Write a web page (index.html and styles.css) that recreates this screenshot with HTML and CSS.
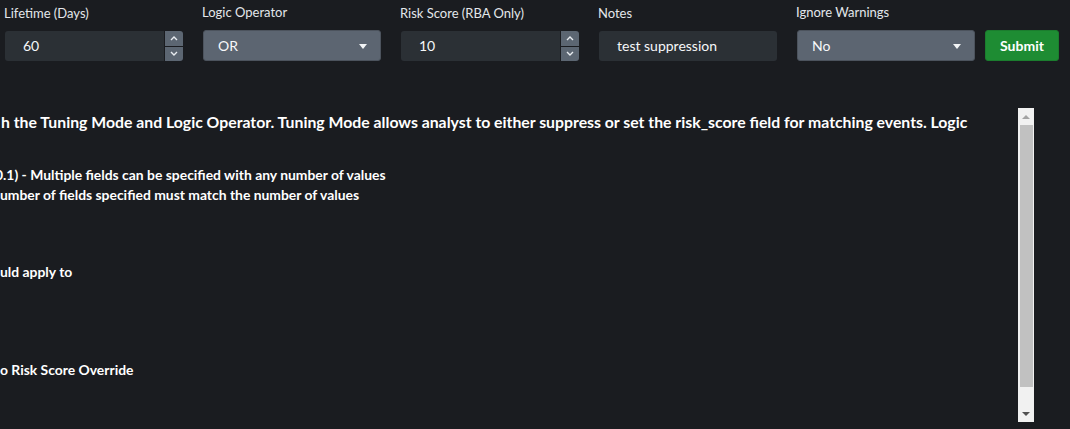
FILE: index.html
```html
<!DOCTYPE html>
<html>
<head>
<meta charset="utf-8">
<link rel="stylesheet" href="styles.css">
</head>
<body>
<div class="form">
  <div class="field">
    <div class="label">Lifetime (Days)</div>
    <div class="numbox">
      <div class="numinput">60</div>
      <div class="spinner">
        <div class="spin"><svg width="8" height="5" viewBox="0 0 8 5"><polyline points="1,4 4,1 7,4" fill="none" stroke="#e8ecf0" stroke-width="1.4"/></svg></div>
        <div class="spin"><svg width="8" height="5" viewBox="0 0 8 5"><polyline points="1,1 4,4 7,1" fill="none" stroke="#e8ecf0" stroke-width="1.4"/></svg></div>
      </div>
    </div>
  </div>
  <div class="field">
    <div class="label">Logic Operator</div>
    <div class="select"><span>OR</span><span class="caret"></span></div>
  </div>
  <div class="field">
    <div class="label">Risk Score (RBA Only)</div>
    <div class="numbox">
      <div class="numinput">10</div>
      <div class="spinner">
        <div class="spin"><svg width="8" height="5" viewBox="0 0 8 5"><polyline points="1,4 4,1 7,4" fill="none" stroke="#e8ecf0" stroke-width="1.4"/></svg></div>
        <div class="spin"><svg width="8" height="5" viewBox="0 0 8 5"><polyline points="1,1 4,4 7,1" fill="none" stroke="#e8ecf0" stroke-width="1.4"/></svg></div>
      </div>
    </div>
  </div>
  <div class="field">
    <div class="label">Notes</div>
    <div class="textinput">test suppression</div>
  </div>
  <div class="field last">
    <div class="label">Ignore Warnings</div>
    <div class="select"><span>No</span><span class="caret"></span></div>
  </div>
  <button class="submit">Submit</button>
</div>

<div class="panel">
  <div class="content">
    <p class="intro">h the Tuning Mode and Logic Operator. Tuning Mode allows analyst to either suppress or set the risk_score field for matching events. Logic</p>
    <p class="item clipped">0.1) - Multiple fields can be specified with any number of values</p>
    <p class="item">umber of fields specified must match the number of values</p>
    <p class="item sec1">uld apply to</p>
    <p class="item sec2">o Risk Score Override</p>
  </div>
  <div class="scrollbar">
    <div class="sb-btn"><span class="tri-up"></span></div>
    <div class="sb-track"><div class="sb-thumb"></div></div>
    <div class="sb-btn"><span class="tri-down"></span></div>
  </div>
</div>
</body>
</html>
```

FILE: styles.css
```css
html, body {
  margin: 0;
  padding: 0;
  background: #1a1c20;
  color: #e9ecef;
  font-family: "Lato", "Liberation Sans", sans-serif;
  height: 429px;
  overflow: hidden;
}

.form {
  display: flex;
  align-items: flex-end;
  padding: 4px 0 0 5px;
}

.field {
  width: 178px;
  margin-right: 20px;
  display: flex;
  flex-direction: column;
}
.field.last { margin-right: 10px; }

.label {
  font-size: 13px;
  line-height: 16px;
  height: 16px;
  margin: 0 0 10px -1px;
  color: #e3e7eb;
  white-space: nowrap;
}

.numbox {
  display: flex;
  height: 30px;
  gap: 1px;
}
.numinput {
  flex: 1;
  background: #2b3035;
  border-radius: 3px 0 0 3px;
  font-size: 14px;
  line-height: 30px;
  padding-left: 18px;
  color: #f5f7f9;
}
.spinner {
  width: 18px;
  display: flex;
  flex-direction: column;
  gap: 1px;
}
.spin {
  flex: 1;
  background: #5c6672;
  display: flex;
  align-items: center;
  justify-content: center;
}
.spin:first-child { border-radius: 0 3px 0 0; }
.spin:last-child { border-radius: 0 0 3px 0; }

.select {
  height: 29px;
  background: #5c6571;
  border: 1px solid #4c535d;
  border-radius: 3px;
  display: flex;
  align-items: center;
  justify-content: space-between;
  padding: 0 13px 0 14px;
  font-size: 14px;
  color: #f7f8fa;
}
.caret {
  width: 0;
  height: 0;
  border-left: 4px solid transparent;
  border-right: 4px solid transparent;
  border-top: 5px solid #f2f4f6;
  margin-top: 1px;
}

.textinput {
  height: 30px;
  background: #2b3035;
  border-radius: 3px;
  font-size: 14px;
  line-height: 30px;
  padding-left: 18px;
  color: #f5f7f9;
}

.submit {
  width: 74px;
  height: 31px;
  background: #1e8c33;
  border: 1px solid #1b7d2e;
  border-radius: 3px;
  color: #fff;
  font-family: inherit;
  font-size: 14px;
  font-weight: 700;
  padding: 0;
  cursor: pointer;
}

.panel {
  display: flex;
  margin-top: 47px;
  height: 314px;
}
.content {
  width: 1018px;
  overflow: hidden;
  white-space: nowrap;
  color: #ffffff;
}
.content p { margin: 0; }
.intro {
  font-size: 15.8px;
  font-weight: 700;
  line-height: 20px;
  margin-top: 4px !important;
  padding-left: 1px;
}
.item {
  font-size: 13.9px;
  font-weight: 700;
  line-height: 20px;
}
.clipped { margin-left: -5px !important; margin-top: 33px !important; }
.sec1 { margin-top: 57px !important; }
.sec2 { margin-top: 78px !important; }

.scrollbar {
  width: 16px;
  background: #f1f1f1;
  display: flex;
  flex-direction: column;
  align-items: center;
}
.sb-btn {
  height: 17px;
  width: 16px;
  display: flex;
  align-items: center;
  justify-content: center;
}
.sb-track {
  flex: 1;
  width: 16px;
  display: flex;
  justify-content: center;
  padding-bottom: 18px;
  box-sizing: border-box;
}
.sb-thumb {
  width: 13px;
  height: 262px;
  background: #c1c1c1;
}
.tri-up {
  width: 0; height: 0;
  border-left: 4px solid transparent;
  border-right: 4px solid transparent;
  border-bottom: 4px solid #a3a3a3;
}
.tri-down {
  width: 0; height: 0;
  border-left: 4px solid transparent;
  border-right: 4px solid transparent;
  border-top: 4px solid #505050;
}
```
